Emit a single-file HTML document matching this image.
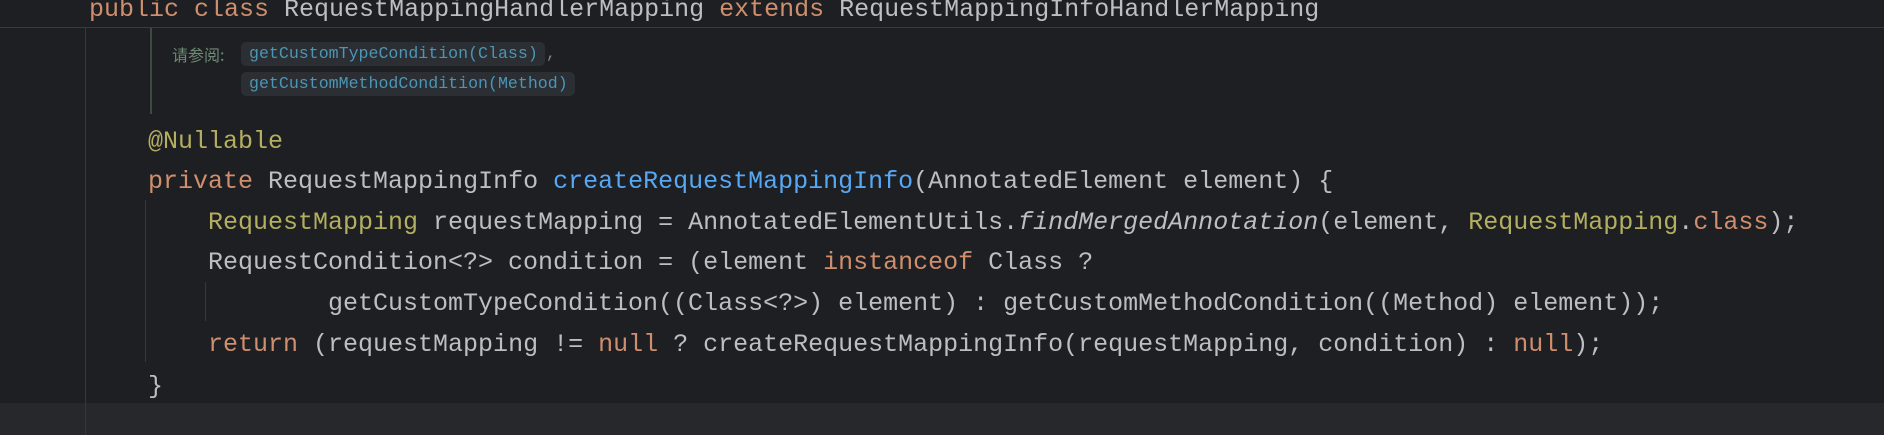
<!DOCTYPE html>
<html><head><meta charset="utf-8"><style>
html,body{margin:0;padding:0;width:1884px;height:435px;overflow:hidden;background:#1e1f22}
.l{position:absolute;left:0;height:41px;line-height:41px;font-family:"Liberation Mono",monospace;font-size:25px;color:#bcbec4;white-space:pre;letter-spacing:0}
.k{color:#cf8e6d}.a{color:#b3ae60}.f{color:#56a8f5}.i{font-style:italic}
.doc{position:absolute;font-family:"Liberation Mono","Noto Sans CJK SC",monospace;font-size:16.6px;white-space:pre}
.box{position:absolute;background:#2b2e33;border-radius:5px;color:#4b95b5;height:24px;line-height:24px;padding-left:8px}
.vl{position:absolute;width:1px;background:#35373b}
</style></head><body>
<div style="position:absolute;left:0;top:0;width:1884px;height:27px;background:#1e1f22"></div>
<div style="position:absolute;left:0;top:27px;width:1884px;height:1px;background:#393b40"></div>
<div style="position:absolute;left:0;top:403px;width:1884px;height:32px;background:#26282c"></div>
<div class="vl" style="left:85px;top:28px;height:407px"></div>
<div class="vl" style="left:145px;top:200px;height:162px"></div>
<div class="vl" style="left:205px;top:282px;height:39px"></div>
<div style="position:absolute;left:150px;top:28px;width:2px;height:86px;background:#3e4a3e"></div>
<div class="l" style="left:89px;top:-11px"><span class="k">public class </span>RequestMappingHandlerMapping <span class="k">extends </span>RequestMappingInfoHandlerMapping</div>
<div class="doc" style="left:172px;top:42px;line-height:24px;color:#6f8a76;font-family:'Noto Sans CJK SC',sans-serif;font-size:16px">请参阅:</div>
<div class="doc box" style="left:241px;top:42px;width:296px">getCustomTypeCondition(Class)</div>
<div class="doc" style="left:546px;top:42px;line-height:24px;color:#6f8a76">,</div>
<div class="doc box" style="left:241px;top:72px;width:326px">getCustomMethodCondition(Method)</div>
<div class="l a" style="left:148px;top:121px">@Nullable</div>
<div class="l" style="left:148px;top:161px"><span class="k">private </span>RequestMappingInfo <span class="f">createRequestMappingInfo</span>(AnnotatedElement element) {</div>
<div class="l" style="left:208px;top:202px"><span class="a">RequestMapping</span> requestMapping = AnnotatedElementUtils.<span class="i">findMergedAnnotation</span>(element, <span class="a">RequestMapping</span>.<span class="k">class</span>);</div>
<div class="l" style="left:208px;top:242px">RequestCondition&lt;?&gt; condition = (element <span class="k">instanceof </span>Class ?</div>
<div class="l" style="left:328px;top:283px">getCustomTypeCondition((Class&lt;?&gt;) element) : getCustomMethodCondition((Method) element));</div>
<div class="l" style="left:208px;top:324px"><span class="k">return </span>(requestMapping != <span class="k">null</span> ? createRequestMappingInfo(requestMapping, condition) : <span class="k">null</span>);</div>
<div class="l" style="left:148px;top:366px">}</div>
</body></html>
